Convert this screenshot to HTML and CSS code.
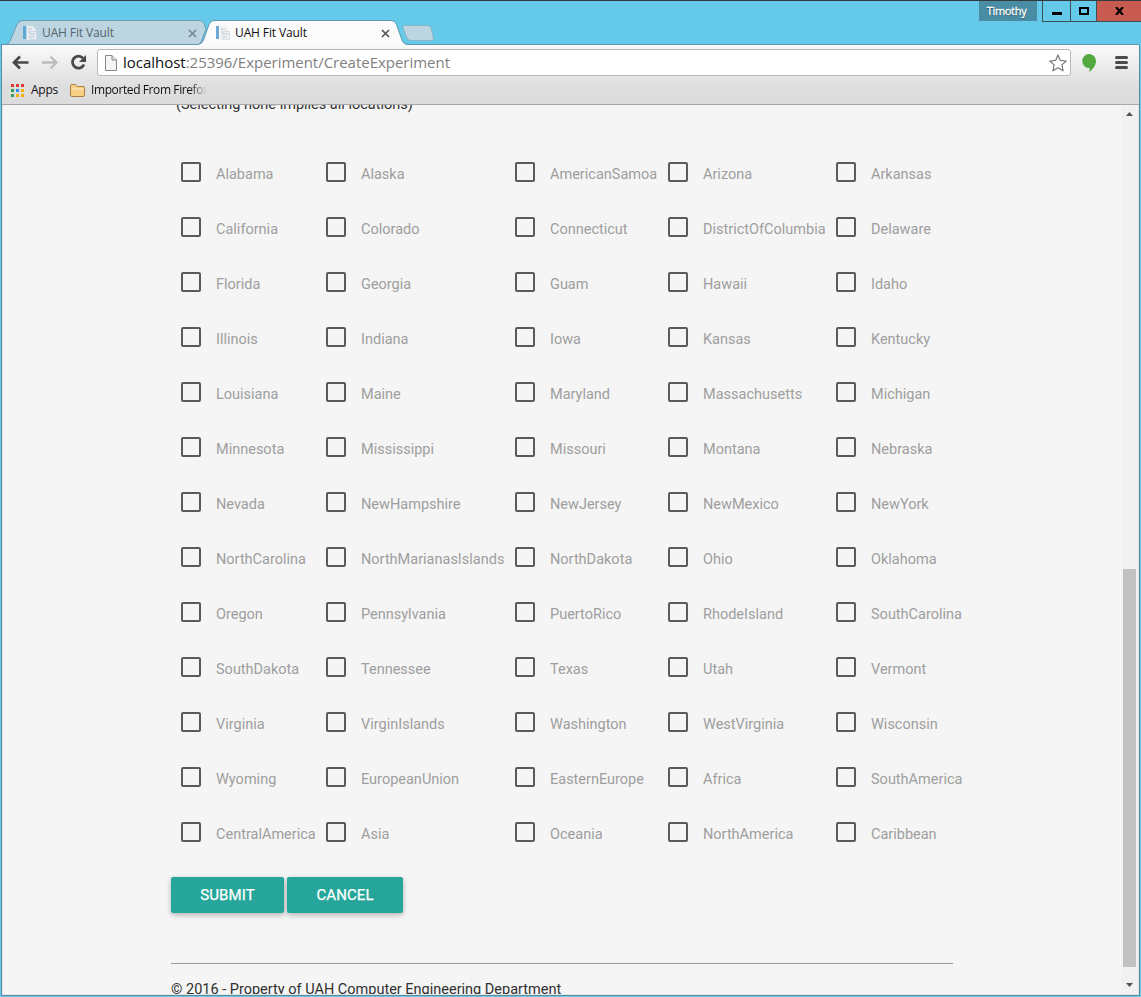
FILE: index.html
```html
<!DOCTYPE html>
<html lang="en">
<head>
<meta charset="utf-8">
<title>UAH Fit Vault</title>
<link rel="stylesheet" href="styles.css">
</head>
<body>
<div class="window">
  <header class="titlebar">
    <svg class="tab-shapes" width="1141" height="45" viewBox="0 0 1141 45">
      <path d="M3 44.500H6Q9 44 10.500 40L17 24.500Q18.500 21 22 20.500H199Q203 20.500 204.500 25L206 29L201 42L199 44.500Z" fill="#bdd5e1" stroke="#6d9fb4"/>
      <path d="M404.500 25.500H427Q430 25.500 431 28L433.500 38Q434 40.500 431 40.500H411Q408 40.500 407 38L403 28Q402.500 25.500 404.500 25.500Z" fill="#bdd5e1" stroke="#8ab4c6"/>
      <path d="M1 44.500H198Q202 44 203.500 40L209 24.500Q210.500 20.500 214 20.500H391Q395 20.500 396.500 24.500L402 40Q403.500 44.500 408 44.500H1139V46H1Z" fill="#fbfbfb" stroke="#5c98ae"/>
      <path d="M202.500 44.500H403.500" stroke="#fbfbfb"/>
    </svg>
    <div class="tab tab-idle">
      <svg class="favicon" width="16" height="16" viewBox="0 0 16 16"><path d="M1 1H4V14H1Z" fill="#5aa9d6"/><path d="M5 1H11L14 5V15H5Z" fill="#e6edf3"/><path d="M6 4H10M6 7H9M8 9H13M8 12H12" stroke="#b3c2d0"/><path d="M7.500 6.500H14.500V14.500H7.500Z" fill="none" stroke="#cfd8e0"/></svg>
      <span class="tab-title">UAH Fit Vault</span>
      <svg class="close" width="9" height="9" viewBox="0 0 9 9"><path d="M1 1L8 8M8 1L1 8" stroke="#75868e" stroke-width="1.700"/></svg>
    </div>
    <div class="tab tab-active">
      <svg class="favicon" width="16" height="16" viewBox="0 0 16 16"><path d="M1 1H4V14H1Z" fill="#6fa9d4"/><path d="M5 1H11L14 5V15H5Z" fill="#f0f2f6"/><path d="M6 4H10M6 7H9M8 9H13M8 12H12" stroke="#c3c9d2"/><path d="M7.500 6.500H14.500V14.500H7.500Z" fill="none" stroke="#dadde2"/></svg>
      <span class="tab-title">UAH Fit Vault</span>
      <svg class="close" width="9" height="9" viewBox="0 0 9 9"><path d="M1 1L8 8M8 1L1 8" stroke="#555" stroke-width="1.700"/></svg>
    </div>
    <div class="profile">Timothy</div>
    <div class="controls">
      <span class="control"><svg width="10" height="10" viewBox="0 0 10 10"><path d="M0 6H10V9H0Z"/></svg></span>
      <span class="control control-max"><svg width="10" height="8" viewBox="0 0 10 8"><path d="M1 1H9V7H1Z" fill="none" stroke="#000" stroke-width="2"/></svg></span>
      <span class="control control-close"><svg width="9" height="8" viewBox="0 0 9 8"><path d="M1 0L8 8M8 0L1 8" stroke="#000" stroke-width="2.200"/></svg></span>
    </div>
  </header>
  <div class="frame">
    <div class="chrome">
      <div class="toolbar">
        <svg class="nav-icons" width="95" height="30" viewBox="0 0 95 30">
          <path d="M26.500 14.500H13M18 8.500L12 14.500L18 20.500" fill="none" stroke="#494949" stroke-width="2.700"/>
          <path d="M40 14.500H53M48.500 8.500L54.500 14.500L48.500 20.500" fill="none" stroke="#bcbcbc" stroke-width="2.300"/>
          <path d="M81 10.200A6 6 0 1 0 82 16.500" fill="none" stroke="#494949" stroke-width="2.800"/><path d="M84 7V14H77Z" fill="#494949"/>
        </svg>
        <div class="omnibox">
          <svg class="page-icon" width="12" height="16" viewBox="0 0 12 16"><path d="M.5.500H7L11.500 5V15.500H.5Z" fill="#f5f5f5" stroke="#868686"/><path d="M7 .500V5H11.500" fill="#ddd" stroke="#868686"/></svg>
          <span class="url"><b>localhost</b>:25396/Experiment/CreateExperiment</span>
          <svg class="star" width="18" height="18" viewBox="0 0 18 18"><path d="M9 1L11.400 6.400L17.200 7L12.900 10.900L14.100 16.800L9 13.800L3.900 16.800L5.100 10.900L.8 7L6.600 6.400Z" fill="#fff" stroke="#777" stroke-width="1.200" stroke-linejoin="round"/></svg>
        </div>
        <svg class="hangouts" width="14" height="18" viewBox="0 0 14 18"><path d="M7 0A7 7 0 0 1 14 7C14 12 10 15.500 7.500 18V14A7 7 0 0 1 7 0Z" fill="#53a93f"/></svg>
        <svg class="menu" width="13" height="13" viewBox="0 0 13 13"><path d="M1.500 1.500H11.500M1.500 6.500H11.500M1.500 11.500H11.500" stroke="#4b4b4b" stroke-width="3" stroke-linecap="round"/></svg>
      </div>
      <div class="bookmarks">
        <svg width="13" height="13" viewBox="0 0 13 13"><path d="M0 0H3V3H0ZM5 0H8V3H5ZM10 0H13V3H10Z" fill="#e33b32"/><path d="M0 5H3V8H0ZM0 10H3V13H0Z" fill="#2f9e57"/><path d="M5 5H8V8H5Z" fill="#2d8fe8"/><path d="M10 5H13V8H10ZM5 10H8V13H5ZM10 10H13V13H10Z" fill="#f3b009"/></svg>
        <span class="apps">Apps</span>
        <svg width="15" height="13" viewBox="0 0 15 13"><path d="M.5 11V2Q.5.500 2 .500H5.500L7 2.500H13Q14.500 2.500 14.500 4V11Q14.500 12.500 13 12.500H2Q.5 12.500.5 11Z" fill="#f6d184" stroke="#ae803f"/><path d="M1.500 5H13.500" stroke="#fff0c2"/></svg>
        <span class="imported">Imported From Firefox</span>
      </div>
    </div>
    <div class="viewport">
      <main class="page">
        <p class="hint">(Selecting none implies all locations)</p>
        <div class="locations">
          <label>Alabama</label><label>Alaska</label><label>AmericanSamoa</label><label>Arizona</label><label>Arkansas</label>
          <label>California</label><label>Colorado</label><label>Connecticut</label><label>DistrictOfColumbia</label><label>Delaware</label>
          <label>Florida</label><label>Georgia</label><label>Guam</label><label>Hawaii</label><label>Idaho</label>
          <label>Illinois</label><label>Indiana</label><label>Iowa</label><label>Kansas</label><label>Kentucky</label>
          <label>Louisiana</label><label>Maine</label><label>Maryland</label><label>Massachusetts</label><label>Michigan</label>
          <label>Minnesota</label><label>Mississippi</label><label>Missouri</label><label>Montana</label><label>Nebraska</label>
          <label>Nevada</label><label>NewHampshire</label><label>NewJersey</label><label>NewMexico</label><label>NewYork</label>
          <label>NorthCarolina</label><label>NorthMarianasIslands</label><label>NorthDakota</label><label>Ohio</label><label>Oklahoma</label>
          <label>Oregon</label><label>Pennsylvania</label><label>PuertoRico</label><label>RhodeIsland</label><label>SouthCarolina</label>
          <label>SouthDakota</label><label>Tennessee</label><label>Texas</label><label>Utah</label><label>Vermont</label>
          <label>Virginia</label><label>VirginIslands</label><label>Washington</label><label>WestVirginia</label><label>Wisconsin</label>
          <label>Wyoming</label><label>EuropeanUnion</label><label>EasternEurope</label><label>Africa</label><label>SouthAmerica</label>
          <label>CentralAmerica</label><label>Asia</label><label>Oceania</label><label>NorthAmerica</label><label>Caribbean</label>
        </div>
        <div class="actions"><button class="btn btn-submit">SUBMIT</button><button class="btn btn-cancel">CANCEL</button></div>
        <hr class="rule">
        <footer class="footer">© 2016 - Property of UAH Computer Engineering Department</footer>
      </main>
      <div class="scrollbar">
        <svg width="7" height="4" viewBox="0 0 7 4"><path d="M0 4L3.500 0L7 4Z" fill="#505050"/></svg>
        <div class="thumb"></div>
        <svg class="down" width="7" height="4" viewBox="0 0 7 4"><path d="M0 0L3.500 4L7 0Z" fill="#505050"/></svg>
      </div>
    </div>
  </div>
</div>
</body>
</html>
```
FILE: styles.css
```css
*, *::before { box-sizing: border-box; }
body { margin: 0; font-family: Roboto, sans-serif; overflow: hidden; }
.window { width: 1141px; height: 997px; background: #65c9e9; border-top: 1px solid #333b3f; display: flex; flex-direction: column; }
.titlebar { height: 44px; flex: none; display: flex; position: relative; }
.tab-shapes { position: absolute; left: 0; top: -1px; }
.tab { position: relative; display: flex; align-items: center; height: 24px; margin-top: 20px; font: 12px/16px "Open Sans", sans-serif; }
.tab-idle { margin-left: 22px; width: 175px; color: #53656e; }
.tab-active { margin-left: 18px; width: 175px; color: #111; }
.tab-title { margin-left: 4px; letter-spacing: -.12px; }
.close { margin-left: auto; }
.profile { margin-left: 589px; width: 58px; height: 20px; padding-right: 3px; background: #488da4; color: #fff; font: 11px/20px "Open Sans", sans-serif; letter-spacing: -.3px; -webkit-text-stroke: .3px #fff; text-align: center; text-shadow: 0 1px 1px #173845; }
.controls { margin-left: 5px; display: flex; height: 21px; border: solid #3d4e55; border-width: 0 0 1px 1px; }
.control { width: 28px; display: flex; align-items: center; justify-content: center; border-right: 1px solid #3d4e55; }
.control-max { width: 26px; }
.control-close { width: 44px; background: #c75b50; border-right: 0; }
.frame { width: 1139px; height: 951px; flex: none; margin-left: 1px; border: solid #548fa5; border-width: 0 1px 1px; display: flex; flex-direction: column; }
.chrome { height: 60px; flex: none; background: linear-gradient(#fafafa, #dedede 70%, #dcdcdc); border-bottom: 1px solid #a8a8a8; }
.toolbar { height: 34px; display: flex; align-items: center; }
.nav-icons { flex: none; margin-top: 1px; }
.omnibox { width: 974px; height: 27px; margin-top: 1px; border: 1px solid #b7b7b7; border-radius: 3px; background: #fff; display: flex; align-items: center; padding: 0 3px 0 7px; }
.url { margin-left: 6px; padding-bottom: 2px; font: 15px/22px "Open Sans", sans-serif; letter-spacing: -.02px; color: #808080; }
.url b { font-weight: 400; color: #111; }
.star { margin-left: auto; }
.hangouts { margin: 2px 0 0 11px; }
.menu { margin-left: 19px; }
.bookmarks { height: 25px; display: flex; align-items: center; padding: 0 0 3px 9px; font: 12px/18px "Open Sans", sans-serif; color: #111; }
.apps { width: 28px; margin: 0 11px 0 7px; letter-spacing: -.25px; }
.imported { margin-left: 6px; width: 116px; letter-spacing: -.4px; overflow: hidden; white-space: nowrap; -webkit-mask-image: linear-gradient(90deg, #000 85%, transparent); mask-image: linear-gradient(90deg, #000 85%, transparent); }
.viewport { flex: 1; min-height: 0; display: flex; overflow: hidden; background: #f5f5f5; border: solid #e4e4e4; border-width: 0 1px 1px; }
.page { width: 1118px; padding-left: 168px; overflow: hidden; }
.hint { margin: -11px 0 0 5px; font-size: 14.5px; line-height: 22px; color: #303030; }
.locations { margin: 28px 0 0 10px; display: grid; grid-template-columns: 145px 189px 153px 168px 140px; grid-auto-rows: 55px; }
.locations label { display: flex; align-items: center; height: 60px; color: #9e9e9e; font-size: 14.5px; white-space: nowrap; }
.locations label::before { content: ""; width: 20px; height: 20px; margin: 0 15px 4px 0; flex: none; border: 2px solid #5a5a5a; border-radius: 2px; }
.actions { display: flex; gap: 3px; margin-top: 18px; }
.btn { height: 36px; border: 0; border-radius: 2px; padding: 0; background: #26a69a; color: #fff; font: 400 15px Roboto, sans-serif; -webkit-text-stroke: .25px #fff; letter-spacing: .1px; box-shadow: 0 2px 5px rgba(0, 0, 0, .16), 0 2px 6px rgba(0, 0, 0, .12); }
.btn-submit { width: 113px; }
.btn-cancel { width: 116px; }
.rule { width: 782px; height: 1px; border: 0; background: #9a9a9a; margin: 50px 0 0; }
.footer { margin-top: 15px; font-size: 14.5px; line-height: 22px; color: #303030; }
.scrollbar { width: 17px; background: #f1f1f1; display: flex; flex-direction: column; align-items: center; padding: 7px 0; }
.scrollbar svg { flex: none; }
.thumb { width: 13px; height: 398px; margin-top: 453px; background: #c1c1c1; flex: none; }
.scrollbar .down { margin-top: 16px; }
```
